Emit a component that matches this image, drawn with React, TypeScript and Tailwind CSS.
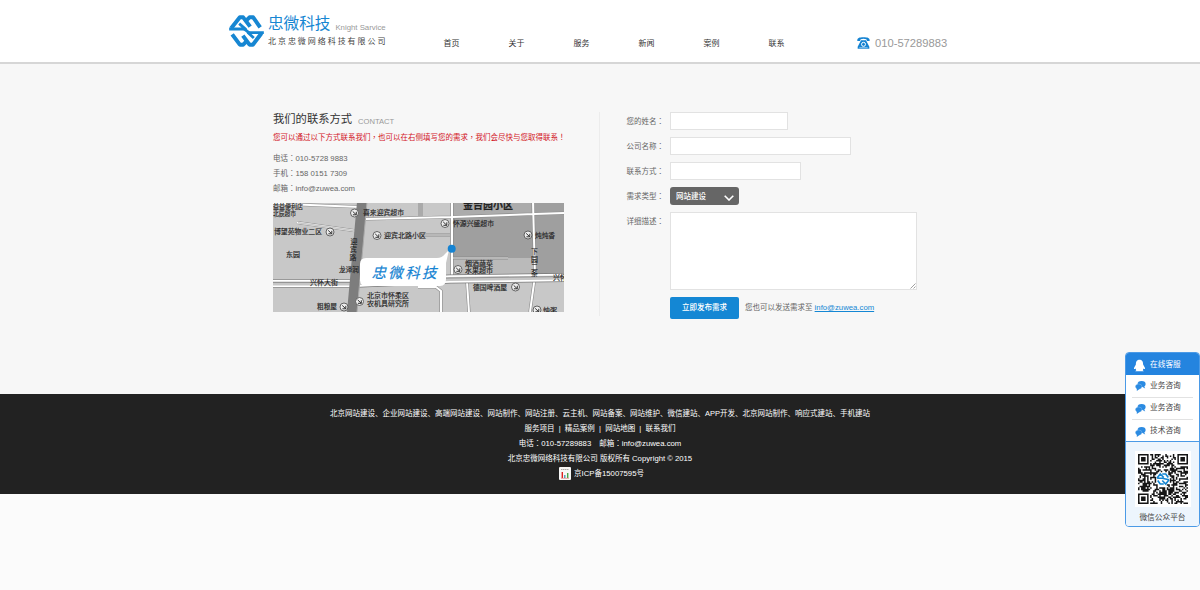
import type { ReactNode } from "react";

const NAV = ["首页", "关于", "服务", "新闻", "案例", "联系"];

/** Sets full-width punctuation centred in its cell and Latin runs a touch larger than the Chinese. */
function Mixed({ text }: { text: string }) {
  return (
    <>
      {text.split(/([：，！]|[A-Za-z0-9@.\-]+)/).map((part, i) => {
        if (/^[：，！]$/.test(part)) {
          return <span key={i} lang="zh-TW" className="leading-none font-['Noto_Sans_CJK_TC',sans-serif]">{part}</span>;
        }
        if (/^[A-Za-z0-9@.\-]+$/.test(part)) {
          return <span key={i} className="text-[7.75px] leading-none">{part}</span>;
        }
        return part;
      })}
    </>
  );
}

function LogoMark() {
  return (
    <svg className="block h-[34px] w-[37px]" viewBox="0 0 110 102" fill="none" stroke="#1686d2" strokeWidth="12" strokeLinejoin="round">
      <path d="M9 43 L35 10 L45 10 L66 38" />
      <path d="M54 20 L64 10 L75 10 L96 40" />
      <path d="M3 45 H52 L33 29" strokeWidth="8.5" />
      <path d="M100 58 L74 92 L64 92 L44 65" />
      <path d="M55 82 L45 92 L35 92 L12 61" />
      <path d="M107 56 H60 L77 72" strokeWidth="8.5" />
      <path d="M46 43 L66 59" strokeWidth="8.5" />
    </svg>
  );
}

function PhoneIcon() {
  return (
    <svg className="block h-[12px] w-[13px]" viewBox="0 0 39 36">
      <path d="M1 12 C0 3 7 1 19 1 C32 1 39 3 38 12 L30 12 L28 7 C23 5 16 5 11 7 L9 12 Z" fill="#1583d2" />
      <path d="M12 10 L27 10 L30 16 L37 29 L37 35 L2 35 L2 29 L9 16 Z" fill="#1583d2" />
      <circle cx="19.5" cy="22" r="6" fill="none" stroke="#fff" strokeWidth="3" />
      <path d="M7 32 H32" stroke="#fff" strokeWidth="1.5" />
    </svg>
  );
}

function Header() {
  return (
    <header className="flex h-[64px] items-start border-b-2 border-[#d6d6d6] bg-white pl-[228px]">
      <div className="flex w-[215.5px] pt-[14px]">
        <LogoMark />
        <div className="ml-[3px] whitespace-nowrap">
          <div className="flex h-[20px] items-center">
            <span className="text-[15.6px] leading-[20px] text-[#1686d2]">忠微科技</span>
            <span className="ml-[5px] mt-[7px] text-[7.8px] leading-[10px] text-[#999]">Knight Sarvice</span>
          </div>
          <div className="mt-[2.5px] text-[8px] leading-[10px] tracking-[1.95px] text-[#444]">北京忠微网络科技有限公司</div>
        </div>
      </div>
      <nav className="flex w-[413.5px] pt-[38px] text-[8px] leading-[12px] text-[#333]">
        {NAV.map((item) => (
          <a key={item} className="w-[65px] shrink-0">{item}</a>
        ))}
      </nav>
      <div className="flex items-center pt-[36px]">
        <PhoneIcon />
        <span className="ml-[5px] text-[11.2px] leading-[14px] text-[#999]">010-57289883</span>
      </div>
    </header>
  );
}

type Label = [number, number, number, string];

const MAP_LABELS: Label[] = [
  [273, 208.7, 30, "益益便利店"],
  [273, 216, 23, "北辰超市"],
  [363, 215.2, 41, "喜来迎宾超市"],
  [274, 234, 48, "博望苑物业二区"],
  [384, 237.8, 42, "迎宾北路小区"],
  [286, 257, 14, "东园"],
  [339, 271.5, 20, "龙泽润"],
  [310, 284.7, 28, "兴怀大街"],
  [317, 309, 20, "粗粮屋"],
  [367, 297.7, 42, "北京市怀柔区"],
  [367, 305.7, 42, "农机具研究所"],
  [453, 225.7, 41, "怀源兴盛超市"],
  [535, 237.7, 20, "炖炖香"],
  [465, 265.7, 28, "烟酒蔬菜"],
  [465, 273.2, 28, "水果超市"],
  [473, 289.7, 34, "德国啤酒屋"],
  [553, 280, 14, "兴怀"],
  [543, 312.5, 14, "炖粥"],
];

const MAP_PINS: [number, number][] = [
  [354.5, 213], [330, 232], [377, 235.5], [344, 307], [359.5, 301.5],
  [445, 223.5], [528, 235], [458, 269.5], [515.5, 287], [537, 310],
];

function ContactMap() {
  return (
    <svg className="block h-[108.5px] w-[291px]" viewBox="273 203 291 108.5">
      <rect x="273" y="202" width="291" height="110" fill="#c8c8c8" />
      <path d="M453 202H533V258H453Z M535 202H564V276H535Z" fill="#9f9f9f" />
      <path d="M453 202H533V214L453 217Z" fill="#ababab" />
      <path d="M453 258H533V275H453Z" fill="#bababa" />
      <path d="M418 202H423V216H418Z" fill="#aaa" />
      <g fill="none" stroke="#8b8b8b" strokeWidth="3.2">
        <path d="M297 222.5L357 231 M273 203.5L360 207 M366 219L452 217L534 214L564 213 M452 202V276 M533 202L535 276L530 312 M418 235H450 M452 258H508 M467 282L469 312" />
        <path d="M418 287H436L441 291V312" />
      </g>
      <g fill="none" stroke="#fff" strokeWidth="2">
        <path d="M297 222.5L357 231 M273 203.5L360 207 M366 219L452 217L534 214L564 213 M452 202V276 M533 202L535 276L530 312 M467 282L469 312" />
        <path d="M418 287H436L441 291V312" />
      </g>
      <path d="M298 222.7L357 231 M418 235H450 M453 258H508" stroke="#c8c8c8" strokeWidth="1.5" />
      <path d="M273 283.5H350L450 279L564 277.5" fill="none" stroke="#777" strokeWidth="9" />
      <path d="M273 283.5H350L450 279L564 277.5" fill="none" stroke="#fff" strokeWidth="7.5" />
      <path d="M273 283.5H350L450 279L564 277.5" fill="none" stroke="#c6c6c6" strokeWidth="4.2" />
      <path d="M273 282.5H350L450 278L564 276.5" fill="none" stroke="#888" strokeWidth="0.8" />
      <path d="M357 202H367L357 312H347Z" fill="#7d7d7d" />
      <path d="M367 202L357 312" stroke="#aaa" strokeWidth="1" />
      {MAP_PINS.map(([x, y]) => (
        <g key={`${x}-${y}`}>
          <circle cx={x} cy={y} r="4" fill="#eee" stroke="#555" strokeWidth="0.9" />
          <path d={`M${x - 1.8} ${y - 1.6}L${x + 1.8} ${y + 1.8}M${x - 1.6} ${y + 1.8}H${x + 1.8}V${y - 1.2}`} stroke="#333" strokeWidth="1" fill="none" />
        </g>
      ))}
      <g fill="#222" stroke="#222" strokeWidth="0.15" fontSize="6.9">
        {MAP_LABELS.map(([x, y, w, t]) => (
          <text key={t} x={x} y={y} textLength={w} lengthAdjust="spacingAndGlyphs">{t}</text>
        ))}
        <text x="463" y="208.5" fontSize="10" fontWeight="700" textLength="50">金台园小区</text>
        <text x="350.5" y="244">迎</text>
        <text x="350" y="252">宾</text>
        <text x="349.5" y="260">路</text>
        <text x="531" y="253.5">下</text>
        <text x="531" y="261.5">园</text>
        <text x="531" y="268.5">二</text>
        <text x="531" y="275.5">条</text>
      </g>
      <path d="M366 258H437Q442 258 445 254L449 250L446 263V279Q446 286 440 286H366Q360 286 360 280V264Q360 258 366 258Z" fill="#fff" />
      <circle cx="451.7" cy="248.8" r="4" fill="#1583d2" />
      <text x="371.5" y="277.5" fontSize="14.5" fontStyle="italic" fill="#1583d2" stroke="#1583d2" strokeWidth="0.2" textLength="65">忠微科技</text>
    </svg>
  );
}

function ContactInfo() {
  return (
    <section className="h-[204px] w-[327px] border-r border-[#ececec] whitespace-nowrap">
      <div className="flex h-[14px] items-end">
        <h2 className="text-[11.3px] leading-[13px] text-[#333]">我们的联系方式</h2>
        <span className="ml-[6px] mb-[-1px] text-[7.6px] leading-[10px] text-[#999]">CONTACT</span>
      </div>
      <p className="mt-[6px] h-[12px] text-[7.5px] leading-[12px] text-[#d2141e]">
        <Mixed text="您可以通过以下方式联系我们，也可以在右侧填写您的需求，我们会尽快与您取得联系！" />
      </p>
      <div className="mt-[7px] mb-[7px] text-[7.5px] text-[#666]">
        {["电话：010-5728 9883", "手机：158 0151 7309", "邮箱：info@zuwea.com"].map((line) => (
          <p key={line} className="h-[15px] leading-[15px]"><Mixed text={line} /></p>
        ))}
      </div>
      <ContactMap />
    </section>
  );
}

function Field({ label, children }: { label: string; children: ReactNode }) {
  return (
    <div className="flex items-start">
      <label className="h-[18px] w-[43.5px] shrink-0 pt-px text-[7.5px] leading-[18px] text-[#666]"><Mixed text={label} /></label>
      {children}
    </div>
  );
}

function ContactForm() {
  return (
    <form className="ml-[26.5px] flex flex-col gap-[7px] whitespace-nowrap">
      <Field label="您的姓名：">
        <input className="h-[18px] w-[118px] border border-[#e2e2e2] bg-white" />
      </Field>
      <Field label="公司名称：">
        <input className="h-[18px] w-[181px] border border-[#e2e2e2] bg-white" />
      </Field>
      <Field label="联系方式：">
        <input className="h-[18px] w-[131px] border border-[#e2e2e2] bg-white" />
      </Field>
      <Field label="需求类型：">
        <button type="button" className="flex h-[18px] w-[69px] items-center justify-between rounded-[3px] bg-[#666] pt-px pr-[5px] pl-[6px] text-[7.5px] font-medium text-white">
          网站建设
          <svg className="mt-[2px] h-[6px] w-[10px]" viewBox="0 0 10 6" fill="none" stroke="#fff" strokeWidth="1.6">
            <path d="M0.7 0.7L5 5L9.3 0.7" />
          </svg>
        </button>
      </Field>
      <Field label="详细描述：">
        <textarea className="block h-[78px] w-[247px] resize-none border border-[#e2e2e2] bg-white" />
        <svg className="relative -ml-[7px] mt-[71px] h-[6px] w-[6px]" viewBox="0 0 6 6" stroke="#888" strokeWidth="0.8">
          <path d="M0.5 5.5L5.5 0.5M3.5 5.5L5.5 3.5" />
        </svg>
      </Field>
      <div className="ml-[43.5px] flex items-center text-[7.5px] text-[#666]">
        <button type="button" className="h-[22px] w-[69px] rounded-[2px] bg-[#1487d4] font-medium text-white">立即发布需求</button>
        <span className="ml-[6px]">
          您也可以发送需求至 <a className="text-[7.75px] text-[#1487d4] underline">info@zuwea.com</a>
        </span>
      </div>
    </form>
  );
}

function Footer() {
  return (
    <footer className="h-[99.5px] bg-[#222] pt-[12px] text-center text-[7.5px] whitespace-nowrap text-white *:h-[15px] *:leading-[15px]">
      <p>北京网站建设、企业网站建设、高端网站建设、网站制作、网站注册、云主机、网站备案、网站维护、微信建站、APP开发、北京网站制作、响应式建站、手机建站</p>
      <p className="whitespace-pre">服务项目  |  精品案例  |  网站地图  |  联系我们</p>
      <p><Mixed text="电话：010-57289883" /><span className="ml-[8px] leading-none"><Mixed text="邮箱：info@zuwea.com" /></span></p>
      <p><Mixed text="北京忠微网络科技有限公司 版权所有 Copyright © 2015" /></p>
      <p className="flex items-center justify-center pl-[3px]">
        <svg className="mr-[3px] h-[13px] w-[12px]" viewBox="0 0 12 13">
          <rect width="12" height="13" rx="1" fill="#f6f6f6" />
          <path d="M2 2.5H10" stroke="#aaa" strokeWidth="1.2" strokeDasharray="1.5 .5" />
          <path d="M3.3 5V11" stroke="#d22" strokeWidth="1.4" />
          <path d="M5.8 8V11" stroke="#38a" strokeWidth="1.2" />
          <path d="M8.7 6V11" stroke="#4a4" strokeWidth="1.4" />
          <path d="M2 11.3H10" stroke="#d66" strokeWidth=".6" />
        </svg>
        <span><Mixed text="京ICP备15007595号" /></span>
      </p>
    </footer>
  );
}

const QR_SIZE = 33;

function qrPath() {
  let seed = 20157;
  let d = "";
  const finder = (x: number, y: number) => {
    const corners = [[0, 0], [QR_SIZE - 7, 0], [0, QR_SIZE - 7]];
    for (const [cx, cy] of corners) {
      const dx = x - cx;
      const dy = y - cy;
      if (dx >= -1 && dx <= 7 && dy >= -1 && dy <= 7) {
        const ring = Math.max(Math.abs(dx - 3), Math.abs(dy - 3));
        return ring === 3 || ring <= 1 ? 1 : 0;
      }
    }
    return -1;
  };
  for (let y = 0; y < QR_SIZE; y++) {
    for (let x = 0; x < QR_SIZE; x++) {
      seed = (seed * 16807) % 2147483647;
      const f = finder(x, y);
      const middle = Math.hypot(x - 16, y - 16) < 4.5;
      const on = f >= 0 ? f === 1 : !middle && seed / 2147483647 > 0.47;
      if (on) d += `M${x} ${y}h1v1h-1z`;
    }
  }
  return d;
}

function QrCode() {
  return (
    <svg className="block h-[56px] w-[56px] bg-white" viewBox="-2 -2 37 37">
      <path d={qrPath()} fill="#151515" />
      <g fill="none" stroke="#1686d2" strokeWidth="1.1">
        <path d="M12.5 16L14.7 13.2L17 15.5M16 13.2H18.3L20 15.5M12.5 16H16L20.5 17" />
        <path d="M20.5 17L18.3 19.8L16 17.5M17 19.8H14.7L13 17.5" />
      </g>
    </svg>
  );
}

function ChatIcon() {
  return (
    <svg className="h-[11px] w-[11px]" viewBox="0 0 30 30" fill="#2b8be2">
      <ellipse cx="18" cy="11" rx="11" ry="8" />
      <path d="M24 15L28 23L18 18Z" />
      <ellipse cx="10" cy="18" rx="9" ry="7" stroke="#fff" strokeWidth="0.6" />
      <path d="M5 22L5 30L14 23Z" />
    </svg>
  );
}

function SupportPanel() {
  return (
    <aside className="absolute top-[352px] right-0 flex h-[175px] w-[75px] flex-col overflow-hidden rounded-[4px] border border-[#4b9ae6] bg-white text-[7.7px] whitespace-nowrap text-[#444]">
      <div className="flex h-[22px] shrink-0 items-center bg-[#2484df] pl-[7px] pt-[2px] text-white">
        <svg className="mr-[4px] h-[13px] w-[13px]" viewBox="0 0 36 36" fill="#fff">
          <path d="M18 2C10 2 8 8 8 15L3 24C2 28 4 29 7 26L9 31L6 34H30L27 31L29 26C32 29 34 28 33 24L28 15C28 8 26 2 18 2Z" />
        </svg>
        在线客服
      </div>
      <div className="flex h-[67px] shrink-0 flex-col border-b border-[#4b9ae6] px-[6px]">
        {["业务咨询", "业务咨询", "技术咨询"].map((t, i) => (
          <div key={i} className="flex h-[22.5px] shrink-0 items-center gap-[4px] border-b border-[#e2e2e2] pl-[3px] last:border-0">
            <ChatIcon />
            {t}
          </div>
        ))}
      </div>
      <div className="flex grow flex-col items-center bg-[#edf5fd] pt-[9px]">
        <QrCode />
        <span className="mt-[5px] leading-[12px]">微信公众平台</span>
      </div>
    </aside>
  );
}

export default function App() {
  return (
    <div className="relative h-[590px] w-[1200px] overflow-hidden bg-[#fbfbfb] font-['Liberation_Sans','Noto_Sans_CJK_SC',sans-serif]">
      <Header />
      <main className="flex h-[330px] items-start bg-[#f7f7f7] pt-[48px] pl-[273px]">
        <ContactInfo />
        <ContactForm />
      </main>
      <Footer />
      <SupportPanel />
    </div>
  );
}
